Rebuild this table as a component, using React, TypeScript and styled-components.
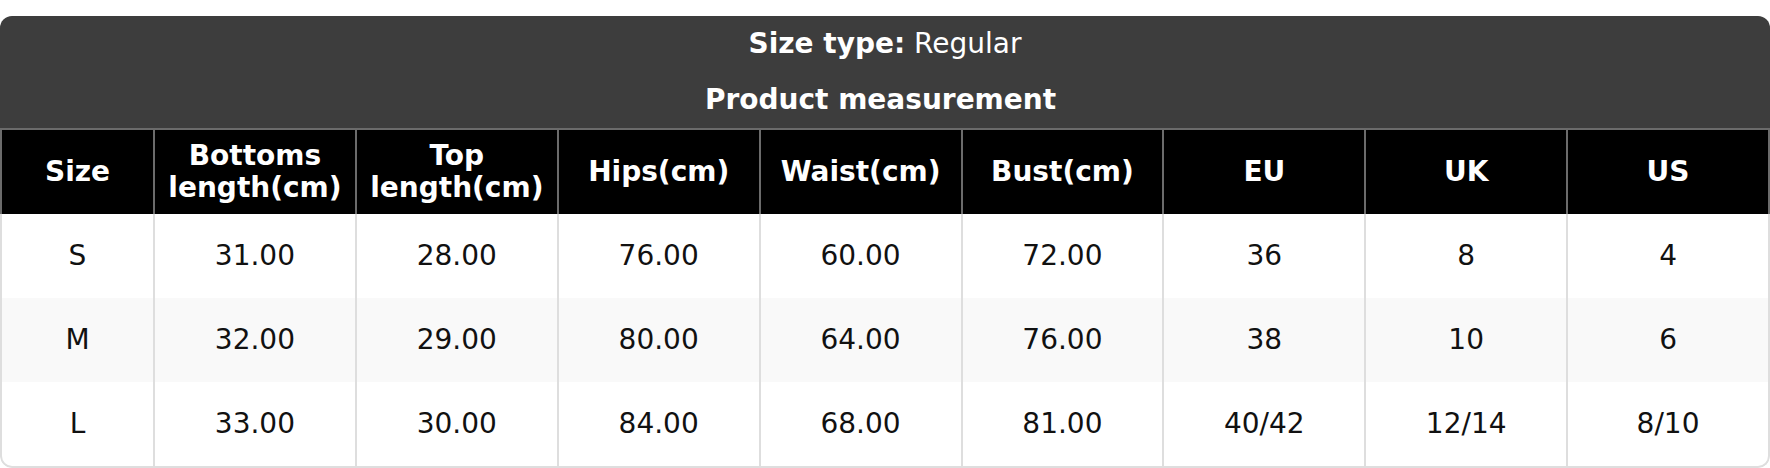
import React from "react";
import styled, { createGlobalStyle } from "styled-components";

const Global = createGlobalStyle`
  html, body { margin: 0; padding: 0; background: #ffffff; }
  body { font-family: "DejaVu Sans", Verdana, sans-serif; }
`;

const Card = styled.div`
  margin-top: 16px;
  border-radius: 12px;
  overflow: hidden;
  background: #ffffff;
`;

const Title = styled.div`
  background: #3d3d3d;
  color: #ffffff;
  font-size: 28px;
  display: flex;
  flex-direction: column;
`;

const TitleLine = styled.div<{ $shift?: number }>`
  height: 56px;
  line-height: 56px;
  text-align: center;
  padding-right: ${(p) => p.$shift ?? 0}px;
`;

const Bold = styled.span`
  font-weight: 700;
`;

const Table = styled.table`
  width: 100%;
  table-layout: fixed;
  border-collapse: separate;
  border-spacing: 0;
  font-size: 28px;
`;

const Th = styled.th`
  background: #000000;
  color: #ffffff;
  font-weight: 700;
  line-height: 32px;
  padding: 10px 6px 10px;
  text-align: center;
  vertical-align: middle;
  border-top: 2px solid #6b6b6b;
  border-right: 2px solid #6b6b6b;
  &:first-child { border-left: 2px solid #6b6b6b; }
`;

const Tr = styled.tr<{ $alt: boolean }>`
  background: ${(p) => (p.$alt ? "#f9f9f9" : "#ffffff")};
  &:last-child td { border-bottom: 2px solid #dedede; }
  &:last-child td:first-child { border-bottom-left-radius: 12px; }
  &:last-child td:last-child { border-bottom-right-radius: 12px; }
`;

const Td = styled.td`
  color: #111111;
  line-height: 32px;
  padding: 26px 6px;
  text-align: center;
  vertical-align: middle;
  border-right: 2px solid #dedede;
  &:first-child { border-left: 2px solid #dedede; }
`;

const headers: React.ReactNode[] = [
  "Size",
  <>Bottoms<br />length(cm)</>,
  <>Top<br />length(cm)</>,
  "Hips(cm)",
  "Waist(cm)",
  "Bust(cm)",
  "EU",
  "UK",
  "US",
];

const rows: string[][] = [
  ["S", "31.00", "28.00", "76.00", "60.00", "72.00", "36", "8", "4"],
  ["M", "32.00", "29.00", "80.00", "64.00", "76.00", "38", "10", "6"],
  ["L", "33.00", "30.00", "84.00", "68.00", "81.00", "40/42", "12/14", "8/10"],
];

export default function App() {
  return (
    <>
      <Global />
      <Card>
        <Title>
          <TitleLine>
            <Bold>Size type:</Bold> Regular
          </TitleLine>
          <TitleLine $shift={9}>
            <Bold>Product measurement</Bold>
          </TitleLine>
        </Title>
        <Table>
          <colgroup>
            <col style={{ width: "155px" }} />
            {Array.from({ length: 8 }).map((_, i) => (
              <col key={i} />
            ))}
          </colgroup>
          <thead>
            <tr>
              {headers.map((h, i) => (
                <Th key={i}>{h}</Th>
              ))}
            </tr>
          </thead>
          <tbody>
            {rows.map((r, i) => (
              <Tr key={i} $alt={i % 2 === 1}>
                {r.map((c, j) => (
                  <Td key={j}>{c}</Td>
                ))}
              </Tr>
            ))}
          </tbody>
        </Table>
      </Card>
    </>
  );
}
